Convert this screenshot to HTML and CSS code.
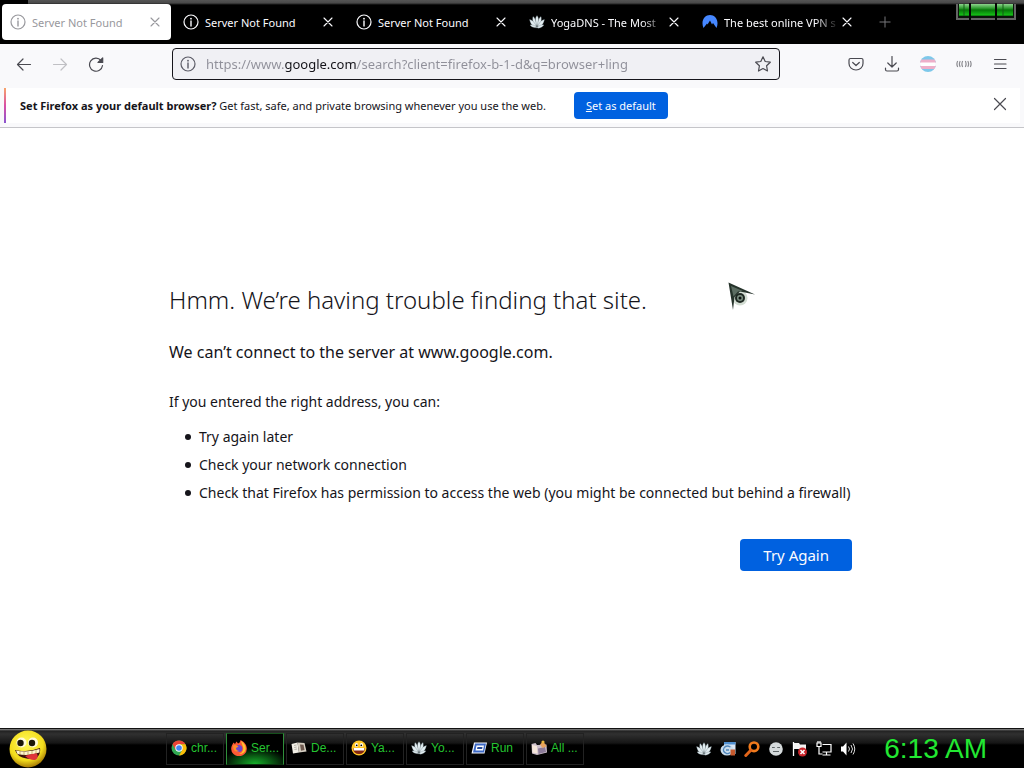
FILE: index.html
```html
<!DOCTYPE html>
<html lang="en">
<head>
    <meta charset="UTF-8">
    <meta name="viewport" content="width=device-width, initial-scale=1.0">
    <title>Server Not Found</title>
    <link rel="stylesheet" href="styles.css">
</head>
<body>
    <!-- Shared icons -->
    <svg class="defs" width="0" height="0" aria-hidden="true">
        <symbol id="info" viewBox="0 0 16 16">
            <circle cx="8" cy="8" r="7" fill="none" stroke="currentColor" stroke-width="1.2"/>
            <path d="M8 7v5" stroke="currentColor" stroke-width="1.4" stroke-linecap="round"/>
            <circle cx="8" cy="4.7" r="0.9" fill="currentColor"/>
        </symbol>
        <symbol id="close" viewBox="0 0 16 16">
            <path d="M4 4l8 8M12 4l-8 8" stroke="currentColor" stroke-width="1.1" stroke-linecap="round"/>
        </symbol>
        <symbol id="lotus" viewBox="0 0 16 16">
            <path d="M8 1.500c2 2.500 2.300 6 0 11.500C5.700 7.500 6 4 8 1.500z"/>
            <path d="M4 2.500c2 1 3.200 4.500 3.500 10C4 10 3 6 4 2.500zM12 2.500c-2 1-3.200 4.500-3.500 10C12 10 13 6 12 2.500z"/>
            <path d="M0.500 5.500c3 .5 5 2.500 7 7.500C4 13.500 1.500 10 0.500 5.500zM15.500 5.500c-3 .5-5 2.500-7 7.500C12 13.500 14.500 10 15.500 5.500z"/>
            <path d="M1 11c3-0.500 4.500 0.500 7 2.500 2.500-2 4-3 7-2.500-1.500 2.500-4.500 3.500-7 3S2.500 13.500 1 11z"/>
        </symbol>
    </svg>

    <header class="browser">
        <div class="tab-strip">
            <div class="tab active">
                <svg class="icon"><use href="#info"/></svg>
                <span class="tab-title">Server Not Found</span>
                <button class="tab-close" aria-label="Close tab"><svg class="icon"><use href="#close"/></svg></button>
            </div>
            <div class="tab">
                <svg class="icon"><use href="#info"/></svg>
                <span class="tab-title">Server Not Found</span>
                <button class="tab-close" aria-label="Close tab"><svg class="icon"><use href="#close"/></svg></button>
            </div>
            <div class="tab">
                <svg class="icon"><use href="#info"/></svg>
                <span class="tab-title">Server Not Found</span>
                <button class="tab-close" aria-label="Close tab"><svg class="icon"><use href="#close"/></svg></button>
            </div>
            <div class="tab">
                <svg class="icon lotus"><use href="#lotus"/></svg>
                <span class="tab-title fade">YogaDNS - The Most</span>
                <button class="tab-close" aria-label="Close tab"><svg class="icon"><use href="#close"/></svg></button>
            </div>
            <div class="tab">
                <svg class="icon" viewBox="0 0 16 16">
                    <path d="M1.500 14C-1.500 7 2.500 1 8 1s9.500 6 6.500 13l-3.500-5-1 1.500L8 6.500 5.500 10.500 5 9.500z" fill="#4687ff"/>
                </svg>
                <span class="tab-title fade">The best online VPN s</span>
                <button class="tab-close" aria-label="Close tab"><svg class="icon"><use href="#close"/></svg></button>
            </div>
            <button class="new-tab" aria-label="New tab">
                <svg class="icon" viewBox="0 0 16 16"><path d="M8 2.500v11M2.500 8h11" stroke="currentColor"/></svg>
            </button>
        </div>

        <nav class="toolbar">
            <div class="tools">
                <button class="tool" aria-label="Back">
                    <svg class="icon" viewBox="0 0 16 16"><path d="M14.500 8.500H1.500M7 3L1.500 8.500 7 14"/></svg>
                </button>
                <button class="tool" aria-label="Forward" disabled>
                    <svg class="icon" viewBox="0 0 16 16"><path d="M1.500 8.500h13M9 3L14.500 8.500 9 14"/></svg>
                </button>
                <button class="tool" aria-label="Reload">
                    <svg class="icon" viewBox="0 0 16 16">
                        <path d="M13 4.500A6.500 6.500 0 1 0 14.500 9.500"/>
                        <path d="M14.700 2V6.500H10z" fill="currentColor"/>
                    </svg>
                </button>
            </div>
            <div class="url-bar">
                <svg class="icon"><use href="#info"/></svg>
                <input class="url" type="text" aria-label="Address" value="https://www.google.com/search?client=firefox-b-1-d&amp;q=browser+ling">
                <button class="star" aria-label="Bookmark this page">
                    <svg class="icon" viewBox="0 0 16 16"><path d="M8 0.800l2.200 4.700 5.100.7-3.700 3.600.9 5.200L8 12.500 3.500 15l.9-5.200L.7 6.200l5.100-.7z"/></svg>
                </button>
            </div>
            <div class="tools">
                <button class="tool" aria-label="Save to Pocket">
                    <svg class="icon" viewBox="0 0 16 16">
                        <path d="M2.500 2.500h11a1.500 1.500 0 0 1 1.500 1.500v3.500a7 6.500 0 0 1-14 0V4a1.500 1.500 0 0 1 1.500-1.500z"/>
                        <path d="M4.700 6.500L8 9.500l3.300-3"/>
                    </svg>
                </button>
                <button class="tool" aria-label="Downloads">
                    <svg class="icon" viewBox="0 0 16 16"><path d="M8 0.500v10.500M3.800 7L8 11l4.200-4M1.500 12v1.500a1.500 1.500 0 0 0 1.500 1.500h10a1.500 1.500 0 0 0 1.500-1.500V12"/></svg>
                </button>
                <button class="tool" aria-label="Account">
                    <svg class="icon flag" viewBox="0 0 16 16">
                        <clipPath id="round"><circle cx="8" cy="8" r="8"/></clipPath>
                        <g clip-path="url(#round)">
                            <rect width="16" height="16" fill="#7dc8ea"/>
                            <rect y="3.500" width="16" height="9.500" fill="#eeafc9"/>
                            <rect y="6.500" width="16" height="3.500" fill="#fff"/>
                        </g>
                    </svg>
                </button>
                <button class="tool faint" aria-label="Extension">
                    <svg class="icon" viewBox="0 0 16 16"><path d="M1.500 5.500q-1.200 2.500 0 5M4 5.500q-1.200 2.500 0 5M6.500 5.500q-1.200 2.500 0 5M9.500 5.500q1.200 2.500 0 5M12 5.500q1.200 2.500 0 5M14.500 5.500q1.200 2.500 0 5"/></svg>
                </button>
                <button class="tool" aria-label="Menu">
                    <svg class="icon" viewBox="0 0 16 16"><path d="M2.500 3.500h11.500M2.500 8h11.500M2.500 12.500h11.500"/></svg>
                </button>
            </div>
        </nav>

        <div class="notice">
            <p class="notice-text"><strong>Set Firefox as your default browser?</strong> Get fast, safe, and private browsing whenever you use the web.</p>
            <button class="primary small"><u>S</u>et as default</button>
            <button class="notice-close" aria-label="Dismiss">
                <svg class="icon" viewBox="0 0 16 16"><path d="M2.500 2.500l11 11M13.500 2.500l-11 11" stroke="currentColor" stroke-width="1.200" stroke-linecap="round"/></svg>
            </button>
        </div>
    </header>

    <main class="error-page">
        <div class="error">
            <h1>Hmm. We’re having trouble finding that site.</h1>
            <p class="lead">We can’t connect to the server at www.google.com.</p>
            <p>If you entered the right address, you can:</p>
            <ul>
                <li>Try again later</li>
                <li>Check your network connection</li>
                <li>Check that Firefox has permission to access the web (you might be connected but behind a firewall)</li>
            </ul>
            <button class="primary try-again">Try Again</button>
        </div>
    </main>

    <footer class="taskbar">
        <button class="start" aria-label="Start">
            <svg viewBox="0 0 38 38">
                <radialGradient id="face" cx="45%" cy="35%" r="65%">
                    <stop offset="0" stop-color="#fff95a"/>
                    <stop offset="0.700" stop-color="#f3dd1c"/>
                    <stop offset="1" stop-color="#a87c05"/>
                </radialGradient>
                <circle cx="19" cy="19" r="18.500" fill="url(#face)"/>
                <circle cx="12.500" cy="12.500" r="5" fill="#fffbd8"/>
                <circle cx="24" cy="12.500" r="5" fill="#fffbd8"/>
                <circle cx="11.500" cy="13" r="3.200" fill="#1a1608"/>
                <circle cx="23" cy="13" r="3.200" fill="#1a1608"/>
                <path d="M6 20q12 3 25-2 1 5-2.500 9-5 2.500-11 1.500-9-1-11.500-8.500z" fill="#3a120a"/>
                <path d="M7 20.500q12 2.500 23.500-1.500v3.500q-11 4-22 1.500z" fill="#fff6d0"/>
                <path d="M11 21v4M15 21.500v4M19 21.500v4M23 21v4M27 20v4" stroke="#a1862c" stroke-width="0.600"/>
                <path d="M16 26q7-3 12-2.500 2 5-2 6.500-5 .5-10-4z" fill="#df3439"/>
            </svg>
        </button>
        <div class="tasks">
            <button class="task">
                <svg class="icon" viewBox="0 0 16 16">
                    <circle cx="8" cy="8" r="7.500" fill="#31a852"/>
                    <path d="M1.500 4.250A7.500 7.500 0 0 1 14.500 4.250H8L4.750 9.900z" fill="#e94335"/>
                    <path d="M14.500 4.250A7.500 7.500 0 0 1 8 15.500L11.250 9.900 8 4.250z" fill="#fbbc09"/>
                    <circle cx="8" cy="8" r="3.700" fill="#fff"/>
                    <circle cx="8" cy="8" r="2.800" fill="#4285f4"/>
                </svg>
                <span>chr...</span>
            </button>
            <button class="task current">
                <svg class="icon" viewBox="0 0 16 16">
                    <path d="M2.500 2.500L4 4 5.500 1.500 7 3.500C8.500 3 9.500 1.500 9.500 0 13 1.500 16 5 15.800 9A7.800 7.200 0 0 1 .2 9C.2 6 1.500 4.500 2.500 2.500z" fill="#ff5a36"/>
                    <path d="M10 1c3 2 5.500 5 4.500 9-1 3-4 4.500-6.500 4 3-1 5-4 4-7z" fill="#ffc52e"/>
                    <circle cx="7.800" cy="8.500" r="3.500" fill="#6a46cf"/>
                    <path d="M2 5.500Q5 4 7.500 6.500L5 8q0 2.500 3.500 3Q4 13 2.500 9z" fill="#ff8f2a"/>
                </svg>
                <span>Ser...</span>
            </button>
            <button class="task">
                <svg class="icon" viewBox="0 0 16 16">
                    <path d="M0.500 4L6.500 2.500l1.500 10L2 13.500z" fill="#f2efe6"/>
                    <path d="M6.500 2.500L13.500 3l2 8.500L8 12.500z" fill="#d6cfc2"/>
                    <path d="M9 4.500l3.500.3 1 5.200-3.500.7z" fill="#6f5a50"/>
                    <path d="M3 5.500l2.500-.5M3.200 7.500l2.500-.5M3.500 9.500l2.500-.5" stroke="#b9b5ab"/>
                </svg>
                <span>De...</span>
            </button>
            <button class="task">
                <svg class="icon" viewBox="0 0 16 16">
                    <circle cx="8" cy="8" r="7.500" fill="#ffc625"/>
                    <ellipse cx="5.500" cy="5" rx="1.600" ry="2" fill="#fff"/>
                    <ellipse cx="10.500" cy="5" rx="1.600" ry="2" fill="#fff"/>
                    <circle cx="5.700" cy="5.300" r="0.900"/>
                    <circle cx="10.300" cy="5.300" r="0.900"/>
                    <path d="M2 8h12q-.5 6-6 6T2 8z" fill="#812512"/>
                    <path d="M2.500 8h11l-.5 2.500H3z" fill="#fff"/>
                </svg>
                <span>Ya...</span>
            </button>
            <button class="task">
                <svg class="icon lotus"><use href="#lotus"/></svg>
                <span>Yo...</span>
            </button>
            <button class="task">
                <svg class="icon" viewBox="0 0 16 16">
                    <path d="M3 2.500h13l-2.500 11H.5z" fill="#f5f8ff"/>
                    <path d="M4 3.500h11l-2 9H2z" fill="#3c68c5"/>
                    <path d="M5.500 5.500h7.500l-1 5H4.500z" fill="#fff"/>
                    <path d="M6.500 7h5l-.4 2H6z" fill="#274a98"/>
                </svg>
                <span>Run</span>
            </button>
            <button class="task">
                <svg class="icon" viewBox="0 0 16 16">
                    <path d="M0.500 4l4-1 1.500 2 9.500-.5.500 8-10 2.500-5-1.500z" fill="#cdbfca"/>
                    <path d="M1 5l5 1 .5 7.500-5-1z" fill="#f6e7da"/>
                    <path d="M7 8.500l7-1.500 1 5-7.500 2z" fill="#8c7b98"/>
                    <path d="M9 4.500l2-2 3 1 1.500 3-4 1.500z" fill="#e9a45e"/>
                    <circle cx="12" cy="2" r="1.600" fill="#eab83e"/>
                </svg>
                <span>All ...</span>
            </button>
        </div>
        <div class="tray">
            <svg class="icon lotus"><use href="#lotus"/></svg>
            <svg class="icon" viewBox="0 0 16 16">
                <path d="M4 1h11.500v12H4z" fill="#d9e6f5"/>
                <path d="M4 1h11.500v2.500H4z" fill="#4f8fd0"/>
                <ellipse cx="7" cy="9" rx="6.500" ry="5.500" fill="#c9dcec"/>
                <path d="M10.500 6Q6 3.500 4 7t2.500 5.500q2 .5 3.500-1M6 9h3" fill="none" stroke="#5086bb" stroke-width="1.300"/>
                <path d="M10.500 8.500H15v6h-4.500z" fill="#c65a2e"/>
            </svg>
            <svg class="icon" viewBox="0 0 16 16">
                <circle cx="10" cy="5.800" r="4.300" fill="none" stroke="#f07a1c" stroke-width="2.600"/>
                <path d="M6.800 9.300L1.800 14.500" stroke="#e2651a" stroke-width="3" stroke-linecap="round"/>
            </svg>
            <svg class="icon" viewBox="0 0 16 16">
                <circle cx="8" cy="8" r="6.800" fill="#d5dadb"/>
                <path d="M4 6.500h2.800M9.200 6.500h2.800M5 10.500h6" stroke="#5d6466"/>
            </svg>
            <svg class="icon" viewBox="0 0 16 16">
                <path d="M1.500 1v14" stroke="#fff" stroke-width="1.300"/>
                <path d="M2 2h5l1 1.500h6V9H7.500L6.500 8H2z" fill="#f3f3f3"/>
                <circle cx="10.500" cy="11" r="4.500" fill="#c9252b"/>
                <path d="M8.500 9l4 4M12.500 9l-4 4" stroke="#fff" stroke-width="1.500"/>
            </svg>
            <svg class="icon" viewBox="0 0 16 16" fill="none" stroke="#fff" stroke-width="1.200">
                <path d="M6.500 3.500h8.500v7.500H6.500M10.500 11v3M6.500 14h8"/>
                <path d="M1 2v3.500h4V2zM2 0v2M4 0v2M3 5.500V13h3.500"/>
            </svg>
            <svg class="icon" viewBox="0 0 16 16">
                <path d="M1 5.500h2L6.500 1.500v13L3 10.500H1z" fill="#fff"/>
                <path d="M8.500 5.500q2 2.500 0 5M11 4q3 4 0 8M13 2.500q3.500 5.500 0 11" fill="none" stroke="#ddd"/>
            </svg>
        </div>
        <time class="clock">6:13 AM</time>
    </footer>

    <!-- Battery gadget and pointer float over the windows -->
    <svg class="battery" viewBox="0 0 60 21" aria-label="Battery">
        <linearGradient id="charge" x1="0" y1="0" x2="0" y2="1">
            <stop offset="0" stop-color="#8ed38d"/>
            <stop offset="0.350" stop-color="#2f9c31"/>
            <stop offset="0.500" stop-color="#067708"/>
            <stop offset="0.900" stop-color="#14bb16"/>
            <stop offset="1" stop-color="#0a620b"/>
        </linearGradient>
        <path d="M0 4h60v16H0z" fill="#656565"/>
        <path d="M2 4h56v14H2z" fill="#0b150b"/>
        <path d="M3 4h10v12H3zM15 4h24v12H15zM41 4h16v12H41z" fill="url(#charge)"/>
        <path d="M8 4v12M47 4v12" stroke="#145c16"/>
        <path d="M14 3v17M40 3v17" stroke="#050505" stroke-width="2"/>
    </svg>
    <svg class="pointer" viewBox="0 0 28 28" aria-hidden="true">
        <circle cx="12" cy="16" r="7.500" fill="#d3ddd3"/>
        <path d="M0.500 0.500L27 12.500 12 9.500 6.500 15 5 28z" fill="#26332b"/>
        <path d="M3 4l12 5-5 .5-4.500 5z" fill="#5c6d62"/>
        <circle cx="12" cy="16" r="5" fill="#1f2923"/>
        <circle cx="12" cy="16" r="3" fill="#7e9184"/>
        <circle cx="12" cy="16" r="1.500" fill="#0c110e"/>
    </svg>
</body>
</html>
```
FILE: styles.css
```css
* {
    box-sizing: border-box;
}

body {
    display: flex;
    flex-direction: column;
    min-height: 100vh;
    margin: 0;
    background: #fff;
    color: #15141a;
    font-family: "Noto Sans", "Open Sans", sans-serif;
    font-size: 11px;
}

button {
    padding: 0;
    border: none;
    background: none;
    color: inherit;
    font: inherit;
    cursor: pointer;
}

.defs {
    position: absolute;
}

.icon {
    flex: none;
    display: block;
    width: 16px;
    height: 16px;
}

.lotus {
    fill: #e3eef2;
    stroke: #52646b;
    stroke-width: 0.3px;
}

/* Tabs */
.tab-strip {
    display: flex;
    gap: 4px;
    height: 44px;
    padding: 4px 2px;
    background: linear-gradient(#555, #484848 3px, #000 5px) 28px 0 no-repeat #000;
    color: #fbfbfe;
}

.tab {
    display: flex;
    align-items: center;
    flex: 0 1 169px;
    min-width: 0;
    padding: 0 8px;
    border-radius: 4px;
}

.tab.active {
    background: #fff;
    color: #98989d;
}

.tab-title {
    flex: 1;
    min-width: 0;
    margin-left: 6px;
    white-space: nowrap;
}

.tab-title.fade {
    -webkit-mask-image: linear-gradient(to left, transparent, #000 24px);
    mask-image: linear-gradient(to left, transparent, #000 24px);
}

.new-tab {
    width: 36px;
    display: grid;
    place-items: center;
    color: #77777a;
}

/* Toolbar */
.toolbar {
    display: flex;
    align-items: center;
    gap: 60px;
    padding: 4px 8px 8px;
    background: #f9f9fb;
}

.tools {
    display: flex;
    gap: 4px;
}

.tool,
.star,
.notice-close {
    display: grid;
    place-items: center;
    width: 32px;
    height: 32px;
    color: #4a4a51;
}

.tool path,
.star path {
    stroke: currentColor;
    stroke-width: 1.2;
    stroke-linecap: round;
    stroke-linejoin: round;
}

.tool svg,
.star svg {
    fill: none;
}

.tool:disabled {
    color: #c0c0c4;
}

.tool.faint {
    color: #8b8b90;
}

.url-bar {
    display: flex;
    align-items: center;
    flex: 1;
    height: 32px;
    padding-left: 7px;
    border: 1px solid #15141a;
    border-radius: 4px;
    background: #f0f0f4;
    color: #5b5b66;
}

/* The domain part of the address is darker than the rest */
.url {
    flex: 1;
    min-width: 0;
    margin-left: 10px;
    padding: 0;
    border: none;
    outline: none;
    background: linear-gradient(to right, #8f8f99 79px, #15141a 79px, #15141a 151px, #8f8f99 151px);
    -webkit-background-clip: text;
    background-clip: text;
    color: transparent;
    font: 13px "Noto Sans", "Open Sans", sans-serif;
}

/* Default browser notice */
.notice {
    display: flex;
    align-items: center;
    height: 40px;
    padding: 0 8px 4px 4px;
    border-bottom: 1px solid #c5c5c9;
    background: linear-gradient(#fff, #fff) 4px 0 / calc(100% - 8px) 35px no-repeat #f9f9fb;
}

.notice::before {
    content: "";
    width: 2px;
    height: 35px;
    background: linear-gradient(#f8a46a, #d94fa5 50%, #8a55d0);
}

.notice-text {
    margin: 0 28px 0 14px;
}

.notice-close {
    align-self: flex-start;
    margin-left: auto;
}

.primary {
    border-radius: 4px;
    background: #0061e0;
    color: #fbfbfe;
}

.small {
    height: 27px;
    padding: 0 12px;
}

/* Error page */
.error-page {
    display: flex;
    align-items: center;
    justify-content: center;
    flex: 1;
    padding-bottom: 4px;
    font-size: 14px;
    line-height: 20px;
}

.error {
    display: flex;
    flex-direction: column;
    width: 686px;
}

.error h1 {
    margin: 0 0 22px;
    font-size: 24px;
    font-weight: 300;
    line-height: 36px;
}

.error p {
    margin: 0 0 15px;
}

.error .lead {
    margin-bottom: 28px;
    font-size: 16px;
    line-height: 24px;
}

.error ul {
    margin: 0 0 28px;
    padding-left: 16px;
    list-style: none;
}

.error li {
    display: flex;
    align-items: center;
    gap: 8px;
    margin-bottom: 8px;
}

.error li::before {
    content: "";
    width: 6px;
    height: 6px;
    border-radius: 50%;
    background: #15141a;
}

.try-again {
    align-self: flex-end;
    height: 32px;
    margin-right: 3px;
    padding: 0 23px;
    font-size: 15px;
}

/* Taskbar */
.taskbar {
    display: flex;
    align-items: center;
    height: 40px;
    padding: 0 37px 0 9px;
    border-top: 1px solid #111;
    background: linear-gradient(#8c8c8c, #222 2px, #303030 5px, #161616 14px, #000 16px);
    font-family: "Liberation Sans", Arial, sans-serif;
}

.start {
    width: 38px;
    height: 38px;
}

.tasks {
    display: flex;
    gap: 2px;
    margin-left: 119px;
}

.task {
    display: flex;
    align-items: center;
    gap: 4px;
    width: 58px;
    height: 32px;
    padding: 0 0 2px 4px;
    border: 1px solid #222;
    color: #25c531;
    font-size: 12px;
    white-space: nowrap;
}

.task.current {
    border-color: #16501c #2f8f3a #0a300e;
    background: radial-gradient(ellipse 60% 55% at 50% 100%, #16b02a, #0a5a14 50%, transparent) #000;
}

.tray {
    display: flex;
    gap: 8px;
    margin-left: auto;
}

.clock {
    margin-left: 28px;
    color: #22e832;
    font-size: 28px;
}

/* Floating items */
.battery {
    position: absolute;
    top: 0;
    right: 8px;
    width: 60px;
    height: 21px;
}

.pointer {
    position: absolute;
    top: 282px;
    left: 728px;
    width: 28px;
    height: 28px;
    pointer-events: none;
}
```
